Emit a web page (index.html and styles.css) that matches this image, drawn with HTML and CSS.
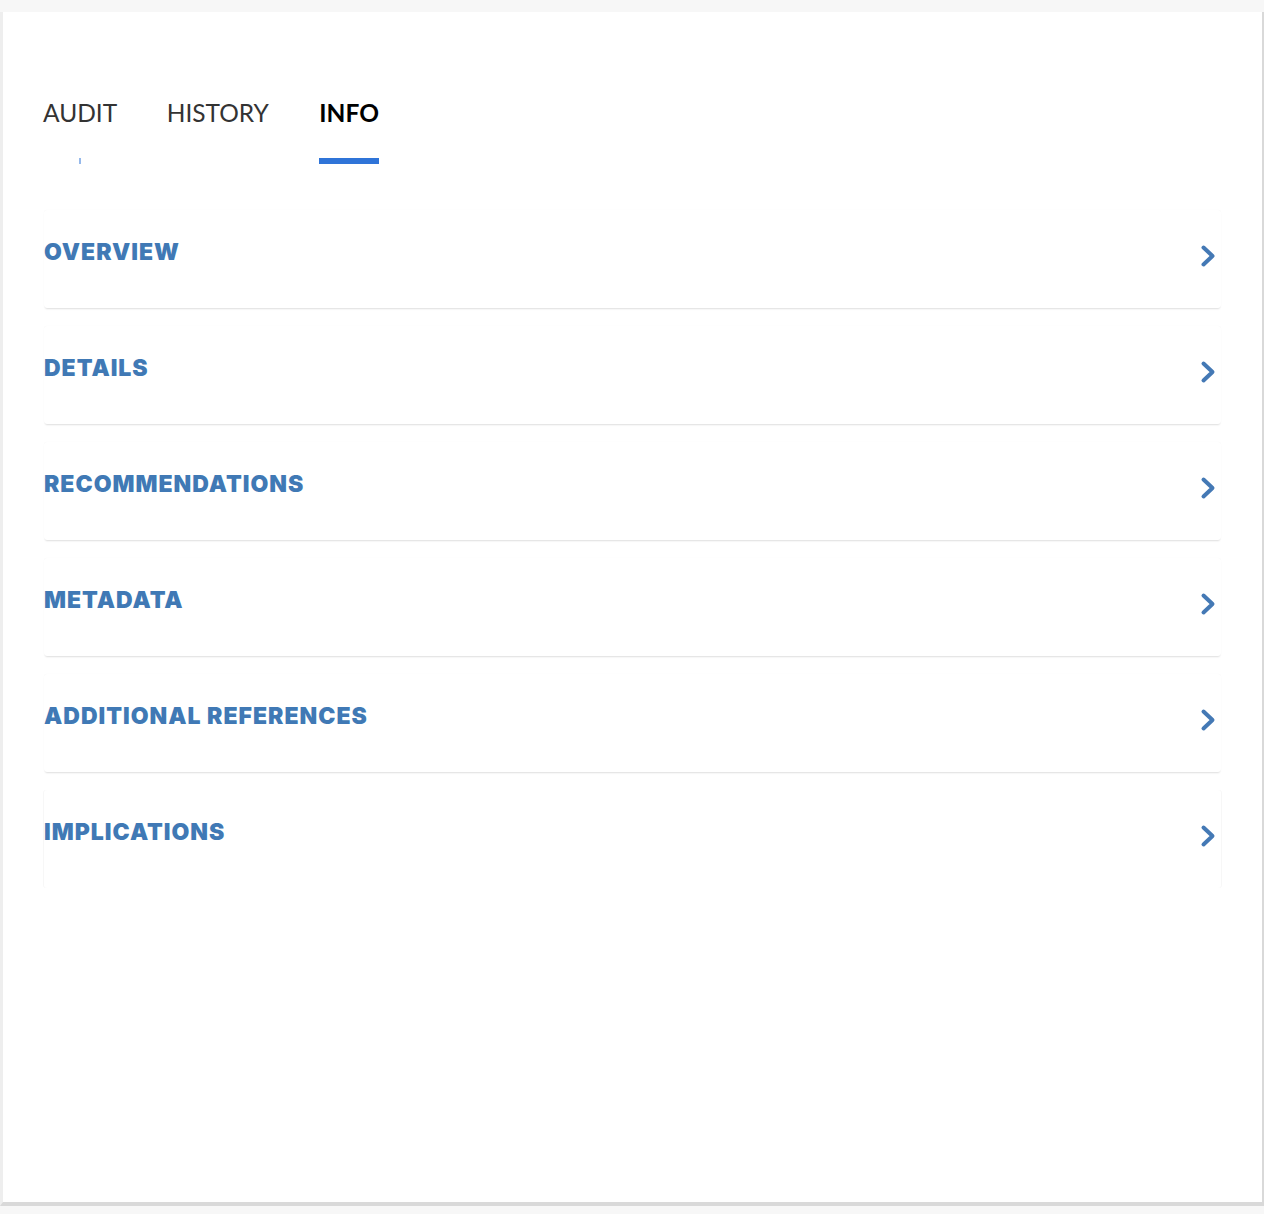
FILE: index.html
```html
<!DOCTYPE html>
<html lang="en">
<head>
<meta charset="utf-8">
<title>Info</title>
<link rel="stylesheet" href="styles.css">
</head>
<body>
<div class="page">
  <div class="panel">
    <nav class="tabs">
      <div class="tab tab-audit">AUDIT</div>
      <div class="tab">HISTORY</div>
      <div class="tab tab-active">INFO</div>
    </nav>
    <div class="sections">
      <div class="card"><span class="card-title">OVERVIEW</span><svg class="chev" viewBox="0 0 16 24" width="16" height="24"><polyline points="3.5,3.5 12.5,12 3.5,20.5"/></svg></div>
      <div class="card"><span class="card-title">DETAILS</span><svg class="chev" viewBox="0 0 16 24" width="16" height="24"><polyline points="3.5,3.5 12.5,12 3.5,20.5"/></svg></div>
      <div class="card"><span class="card-title">RECOMMENDATIONS</span><svg class="chev" viewBox="0 0 16 24" width="16" height="24"><polyline points="3.5,3.5 12.5,12 3.5,20.5"/></svg></div>
      <div class="card"><span class="card-title">METADATA</span><svg class="chev" viewBox="0 0 16 24" width="16" height="24"><polyline points="3.5,3.5 12.5,12 3.5,20.5"/></svg></div>
      <div class="card"><span class="card-title">ADDITIONAL REFERENCES</span><svg class="chev" viewBox="0 0 16 24" width="16" height="24"><polyline points="3.5,3.5 12.5,12 3.5,20.5"/></svg></div>
      <div class="card card-last"><span class="card-title">IMPLICATIONS</span><svg class="chev" viewBox="0 0 16 24" width="16" height="24"><polyline points="3.5,3.5 12.5,12 3.5,20.5"/></svg></div>
    </div>
  </div>
</div>
</body>
</html>
```
FILE: styles.css
```css
html, body {
  margin: 0;
  padding: 0;
  background: #f7f7f7;
}
body {
  font-family: Lato, "Open Sans", sans-serif;
}
.page {
  padding-top: 12px;
  height: 1214px;
  box-sizing: border-box;
}
.panel {
  background: #ffffff;
  border-left: 3px solid #eeeeee;
  border-right: 2px solid #d9d9d9;
  border-bottom: 4px solid #d9d9d9;
  height: 1194px;
  box-sizing: border-box;
  padding: 86px 41px 0 40px;
}
.tabs {
  display: flex;
  gap: 49.5px;
}
.tab {
  position: relative;
  font-size: 24.5px;
  line-height: 30px;
  color: #333333;
  padding-bottom: 36px;
}
.tab::after {
  content: "";
  position: absolute;
  left: 50%;
  bottom: 0;
  width: 0;
  height: 6px;
  background: #2f74d8;
  transform: translateX(-50%);
}
.tab-audit::after {
  width: 1px;
}
.tab-active {
  color: #000000;
  font-weight: 700;
  margin-left: 1px;
}
.tab-active::after {
  left: 0;
  width: 100%;
  transform: none;
}
.sections {
  margin-top: 46px;
  margin-left: 1px;
  display: flex;
  flex-direction: column;
  gap: 18px;
}
.card {
  position: relative;
  height: 98px;
  box-sizing: border-box;
  padding-top: 29px;
  background: #ffffff;
  border-radius: 3px;
  box-shadow: 0 2px 2px -1px rgba(0, 0, 0, 0.13), 0 0 1px rgba(0, 0, 0, 0.06);
  display: flex;
  align-items: flex-start;
  justify-content: space-between;
}
.card-last {
  box-shadow: -1px 0 0 rgba(0, 0, 0, 0.03), 1px 0 0 rgba(0, 0, 0, 0.03);
}
.card-title {
  font-family: Inter, Lato, sans-serif;
  font-size: 23px;
  line-height: 27px;
  font-weight: 900;
  letter-spacing: 1px;
  color: #4079b5;
}
.chev {
  margin-top: 5px;
  margin-right: 5px;
  fill: none;
  stroke: #4479b5;
  stroke-width: 4;
  stroke-linecap: round;
  stroke-linejoin: round;
}
```
